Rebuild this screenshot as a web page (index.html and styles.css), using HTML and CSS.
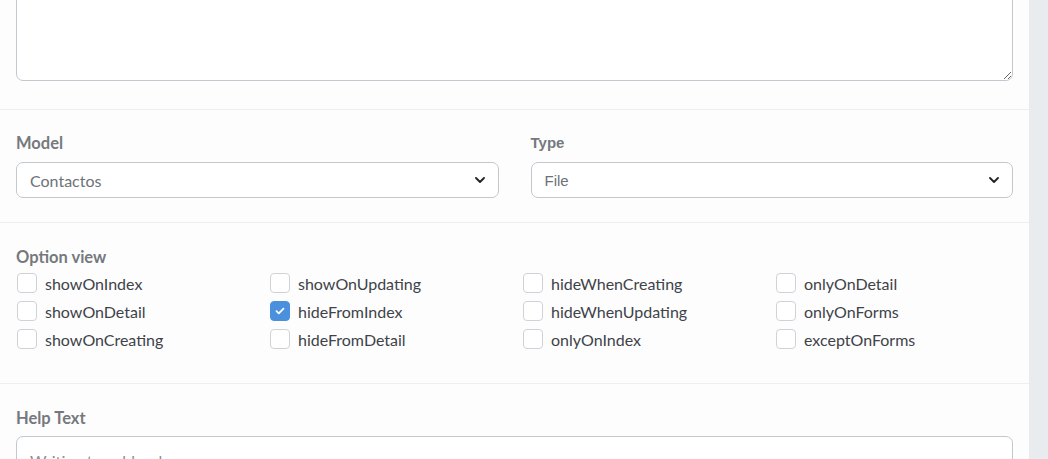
FILE: index.html
```html
<!DOCTYPE html>
<html>
<head>
<meta charset="utf-8">
<link rel="stylesheet" href="styles.css">
</head>
<body>
<div class="layout">
  <div class="card">
    <section class="sec sec-top">
      <textarea class="ta"></textarea>
    </section>
    <section class="sec sec-row">
      <div class="field">
        <label class="lbl">Model</label>
        <div class="select"><span class="val">Contactos</span><svg class="chev" viewBox="0 0 10 6" width="10" height="6"><path d="M1 1l4 4 4-4" fill="none" stroke="#222" stroke-width="1.8" stroke-linecap="round" stroke-linejoin="round"/></svg></div>
      </div>
      <div class="field">
        <label class="lbl lbl-arial">Type</label>
        <div class="select arial"><span class="val">File</span><svg class="chev" viewBox="0 0 10 6" width="10" height="6"><path d="M1 1l4 4 4-4" fill="none" stroke="#222" stroke-width="1.8" stroke-linecap="round" stroke-linejoin="round"/></svg></div>
      </div>
    </section>
    <section class="sec sec-opts">
      <div class="lbl">Option view</div>
      <div class="grid">
        <label class="opt"><span class="box"></span>showOnIndex</label>
        <label class="opt"><span class="box"></span>showOnUpdating</label>
        <label class="opt"><span class="box"></span>hideWhenCreating</label>
        <label class="opt"><span class="box"></span>onlyOnDetail</label>
        <label class="opt"><span class="box"></span>showOnDetail</label>
        <label class="opt"><span class="box on"><svg viewBox="0 0 10 8" width="10" height="8"><path d="M1.5 4.2l2.3 2.2L8.5 1.6" fill="none" stroke="#fff" stroke-width="1.8" stroke-linecap="round" stroke-linejoin="round"/></svg></span>hideFromIndex</label>
        <label class="opt"><span class="box"></span>hideWhenUpdating</label>
        <label class="opt"><span class="box"></span>onlyOnForms</label>
        <label class="opt"><span class="box"></span>showOnCreating</label>
        <label class="opt"><span class="box"></span>hideFromDetail</label>
        <label class="opt"><span class="box"></span>onlyOnIndex</label>
        <label class="opt"><span class="box"></span>exceptOnForms</label>
      </div>
    </section>
    <section class="sec sec-help">
      <div class="lbl">Help Text</div>
      <div class="input">Writing type blood</div>
    </section>
  </div>
  <div class="rail"></div>
</div>
</body>
</html>
```
FILE: styles.css
```css
* { box-sizing: border-box; }
html, body { margin: 0; padding: 0; height: 100%; overflow: hidden; }
body { font-family: "Lato", "Open Sans", sans-serif; background: #fff; }
.layout { display: flex; height: 459px; }
.card { width: 1029px; background: #fdfdfd; }
.rail { flex: 1; background: #e9ecef; }
.sec { padding: 0 16px; border-bottom: 1px solid #eceef0; }
.sec-top { display: flow-root; padding-bottom: 28px; height: 110px; }
.ta { display: block; width: 100%; height: 101px; margin-top: -20px; border: 1px solid #c3c8cf; border-radius: 7px; background: #fff; resize: both; }
.sec-row { display: flex; gap: 32px; padding-top: 23px; height: 113px; }
.field { flex: 1; }
.lbl { display: block; font-weight: 700; font-size: 16.5px; color: #75797e; line-height: 20px; }
.lbl-arial { font-family: "Liberation Sans", Arial, sans-serif; font-size: 15px; }
.select { margin-top: 9px; height: 36px; border: 1px solid #c3c8cf; border-radius: 7px; background: #fff; display: flex; align-items: center; justify-content: space-between; padding: 0 13px 0 13px; font-size: 16px; color: #6c7278; }
.select.arial { font-family: "Liberation Sans", Arial, sans-serif; font-size: 15px; }
.chev { display: block; }
.sec-opts { padding-top: 24px; height: 161px; }
.grid { display: grid; grid-template-columns: repeat(4, 253px); row-gap: 8px; margin-top: 6px; }
.opt { display: flex; align-items: center; gap: 8px; font-size: 16px; color: #3d4349; height: 20px; }
.box { width: 20px; height: 20px; border: 1px solid #cfd3d8; border-radius: 4px; background: #fff; display: flex; align-items: center; justify-content: center; flex: none; margin-left: 1px; }
.box.on { background: #4a90dc; border-color: #4a90dc; }
.sec-help { border-bottom: none; padding-top: 24px; }
.input { margin-top: 8px; height: 40px; border: 1px solid #c3c8cf; border-radius: 7px; background: #fff; padding: 14px 13px; font-size: 16px; color: #8a8f94; }
```
